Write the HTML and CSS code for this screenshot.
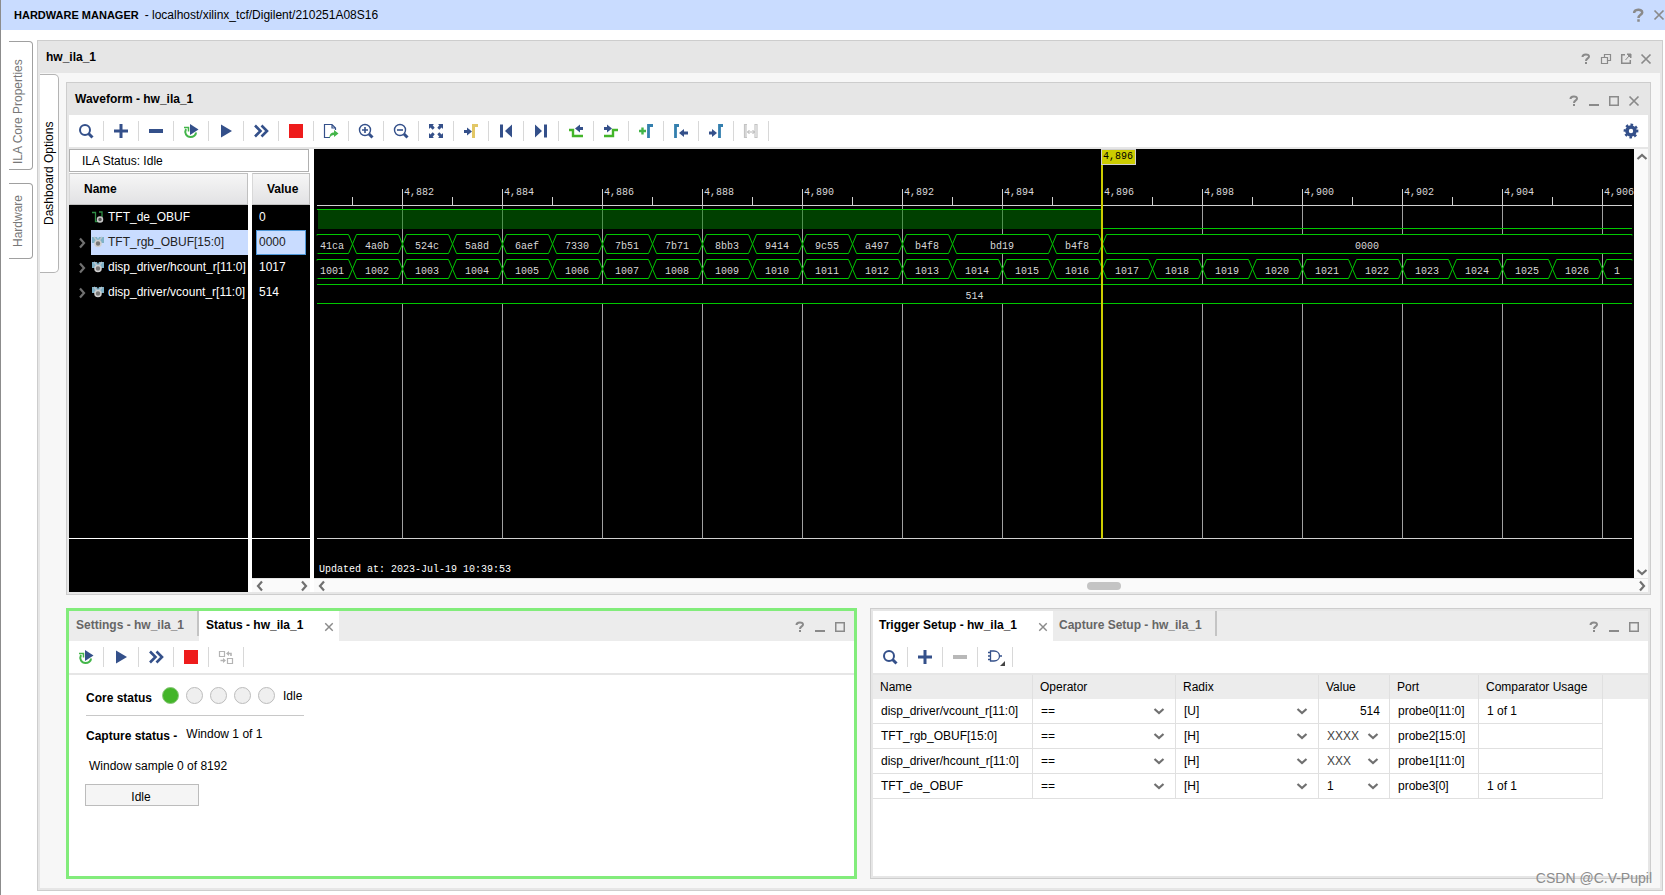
FILE: index.html
```html
<!DOCTYPE html>
<html lang="en">
<head>
<meta charset="utf-8">
<title>Hardware Manager</title>
<link rel="stylesheet" href="styles.css">
</head>
<body>
<svg class="defs" aria-hidden="true">
  <symbol id="search" viewBox="0 0 16 16"><circle cx="7" cy="7" r="5" fill="none" stroke="#34508a" stroke-width="2"/><path d="M10.5 10.5L14.5 14.5" stroke="#34508a" stroke-width="3"/></symbol>
  <symbol id="plus" viewBox="0 0 16 16"><path d="M1 8H15M8 1V15" stroke="currentColor" stroke-width="3"/></symbol>
  <symbol id="minus" viewBox="0 0 16 16"><path d="M1 8H15" stroke="currentColor" stroke-width="4"/></symbol>
  <symbol id="rerun" viewBox="0 0 16 16"><path d="M3 6C1 10 3.500 14 7.500 14C10.500 14 13 12 13 9.500" fill="none" stroke="#43b549" stroke-width="2"/><path d="M1 4.500H5.500V8.500" fill="none" stroke="#43b549" stroke-width="1.500"/><path d="M7 1L15.500 6.500L7 12Z" fill="#34508a"/></symbol>
  <symbol id="play" viewBox="0 0 16 16"><path d="M3 1.500L14 8L3 14.500Z" fill="#34508a"/></symbol>
  <symbol id="ff" viewBox="0 0 16 16"><path d="M2 2.500L7.500 8L2 13.500M8.500 2.500L14 8L8.500 13.500" fill="none" stroke="#34508a" stroke-width="2.600"/></symbol>
  <symbol id="stop" viewBox="0 0 16 16"><path d="M1 1H15V15H1Z" fill="#ee1c1c"/></symbol>
  <symbol id="export" viewBox="0 0 16 16"><path d="M7 14.500H1.500V1.500H9L12.500 5V7M9 1.500V5H12.500" fill="none" stroke="#34508a" stroke-width="1.200"/><path d="M6.500 15C6.500 11 8 9.500 11 9.500V7L15.500 10.500L11 14V12C9 12 7.500 13 6.500 15Z" fill="#43b549"/></symbol>
  <symbol id="zoomin" viewBox="0 0 16 16"><circle cx="7" cy="7" r="5.500" fill="none" stroke="#34508a" stroke-width="1.400"/><path d="M4 7H10M7 4V10" stroke="#34508a" stroke-width="1.600"/><path d="M11 11L14.500 14.500" stroke="#34508a" stroke-width="3"/></symbol>
  <symbol id="zoomout" viewBox="0 0 16 16"><circle cx="7" cy="7" r="5.500" fill="none" stroke="#34508a" stroke-width="1.400"/><path d="M4 7H10" stroke="#34508a" stroke-width="1.600"/><path d="M11 11L14.500 14.500" stroke="#34508a" stroke-width="3"/></symbol>
  <symbol id="fit" viewBox="0 0 16 16"><path d="M1 1H6L4.700 2.300L6.700 4.700L4.700 6.700L2.400 4.600L1 6ZM15 1H10L11.300 2.300L9.300 4.700L11.300 6.700L13.600 4.600L15 6ZM1 15H6L4.700 13.700L6.700 11.300L4.700 9.300L2.400 11.400L1 10ZM15 15H10L11.300 13.700L9.300 11.300L11.300 9.300L13.600 11.400L15 10Z" fill="#34508a"/></symbol>
  <symbol id="trig" viewBox="0 0 16 16"><path d="M1 7H4V4.500L9 8.500L4 12.500V10H1Z" fill="#34508a"/><path d="M10.500 15V2.500H15" fill="none" stroke="#e2c766" stroke-width="3"/></symbol>
  <symbol id="first" viewBox="0 0 16 16"><path d="M2 1.500H5V14.500H2ZM14 1.500V14.500L7 8Z" fill="#34508a"/></symbol>
  <symbol id="last" viewBox="0 0 16 16"><path d="M14 1.500H11V14.500H14ZM2 1.500V14.500L9 8Z" fill="#34508a"/></symbol>
  <symbol id="prevedge" viewBox="0 0 16 16"><path d="M1 7H5V13H15" fill="none" stroke="#43b529" stroke-width="2.400"/><path d="M15 4V7H12V9.500L7 5.500L12 1.500V4Z" fill="#34508a"/></symbol>
  <symbol id="nextedge" viewBox="0 0 16 16"><path d="M1 13H10V7H15" fill="none" stroke="#43b529" stroke-width="2.400"/><path d="M1 4V7H4V9.500L9 5.500L4 1.500V4Z" fill="#34508a"/></symbol>
  <symbol id="addmark" viewBox="0 0 16 16"><path d="M1 8H8M4.500 4.500V11.500" stroke="#43b549" stroke-width="2.400"/><path d="M10.500 15V2.500H15" fill="none" stroke="#347fae" stroke-width="2.800"/></symbol>
  <symbol id="prevmark" viewBox="0 0 16 16"><path d="M2.500 15V2.500H6" fill="none" stroke="#347fae" stroke-width="2.800"/><path d="M15 8.500V11.500H11V14L6 10L11 6V8.500Z" fill="#34508a"/></symbol>
  <symbol id="nextmark" viewBox="0 0 16 16"><path d="M11.500 15V2.500H15" fill="none" stroke="#347fae" stroke-width="2.800"/><path d="M1 8.500V11.500H4V14L9 10L4 6V8.500Z" fill="#34508a"/></symbol>
  <symbol id="span" viewBox="0 0 16 16"><path d="M4 1.500H1.500V14.500H4M3 1.500V14.500M12 1.500H14V14.500H12Z" fill="none" stroke="#c4c4c4" stroke-width="1.200"/><path d="M4.500 9H11.500M6.500 7L4.500 9L6.500 11M9.500 7L11.500 9L9.500 11" fill="none" stroke="#b4b4b4"/></symbol>
  <symbol id="swap" viewBox="0 0 16 16"><path d="M1.500 2.500H6.500V7.500H1.500ZM9.500 9.500H14.500V14.500H9.500Z" fill="none" stroke="#b4b4b4" stroke-width="1.200"/><path d="M13 7V4.500H10M2.500 11.500H6" fill="none" stroke="#b4b4b4" stroke-width="1.600"/><path d="M8 4.500L11 2V7ZM8 11.500L5 9V14Z" fill="#b4b4b4"/></symbol>
  <symbol id="gate" viewBox="0 0 20 18"><path d="M5.500 3H9C12 3 14.500 5 14.500 8S12 13 9 13H5.500ZM3 4.500H5.500M3 8H5.500M3 11.500H5.500M14.500 8H17" fill="none" stroke="#34508a" stroke-width="1.300"/><path d="M20 13V18H15Z" fill="#444"/></symbol>
  <symbol id="gear" viewBox="0 0 16 16"><circle cx="8" cy="8" r="4" fill="none" stroke="#34508a" stroke-width="3.600"/><circle cx="8" cy="8" r="6" fill="none" stroke="#34508a" stroke-width="2.800" stroke-dasharray="2.400 2.312" transform="rotate(-11 8 8)"/></symbol>
  <symbol id="help" viewBox="0 0 12 12"><path d="M2.500 4C2.500 .700 9 .500 9 3.500C9 5.500 6 5.300 6 8" fill="none" stroke="#8a8a8a" stroke-width="2"/><path d="M5 9H7V11H5Z" fill="#8a8a8a"/></symbol>
  <symbol id="close" viewBox="0 0 12 12"><path d="M1.500 1.500L10.500 10.500M10.500 1.500L1.500 10.500" stroke="#8a8a8a" stroke-width="1.700"/></symbol>
  <symbol id="min" viewBox="0 0 12 12"><path d="M1 10H11" stroke="#8a8a8a" stroke-width="2"/></symbol>
  <symbol id="max" viewBox="0 0 12 12"><path d="M1.750 1.750H10.250V10.250H1.750Z" fill="none" stroke="#8a8a8a" stroke-width="1.500"/></symbol>
  <symbol id="restore" viewBox="0 0 12 12"><path d="M4.500 4.500V1.500H10.500V7.500H7.500M1.500 4.500H7.500V10.500H1.500Z" fill="none" stroke="#8a8a8a" stroke-width="1.200"/></symbol>
  <symbol id="float" viewBox="0 0 12 12"><path d="M5 1.700H1.700V10.300H10.300V7" fill="none" stroke="#8a8a8a" stroke-width="1.500"/><path d="M11 1V5L7 1ZM5.500 7L9 3" fill="#8a8a8a" stroke="#8a8a8a"/></symbol>
  <symbol id="chev" viewBox="0 0 12 12"><path d="M1.500 4L6 8L10.500 4" fill="none" stroke="#707070" stroke-width="2.200"/></symbol>
  <symbol id="wire" viewBox="0 0 12 12"><path d="M0 1.500H3.500V10.500H7M7 1H10V6" fill="none" stroke="#2f8f46" stroke-width="1.300"/><circle cx="8" cy="8.500" r="2.500" fill="#555" stroke="#c8c8c8" stroke-width="1.500"/></symbol>
  <symbol id="bus" viewBox="0 0 12 12"><path d="M0 1H5L6 3L7 1H12V7H0Z" fill="#7fb2c8"/><path d="M2 1L6 6L10 1" fill="none" stroke="#b8c4cc" stroke-width="1.500"/><circle cx="6" cy="7.500" r="3" fill="#777" stroke="#d0d0d0" stroke-width="1.600"/></symbol>
</svg>

<div class="app">
  <header class="app-bar">
    <h1>HARDWARE MANAGER</h1>
    <span class="app-path">- localhost/xilinx_tcf/Digilent/210251A08S16</span>
    <div class="win wide">
      <button aria-label="Help"><svg class="big"><use href="#help"/></svg></button>
      <button aria-label="Close"><svg><use href="#close"/></svg></button>
    </div>
  </header>
  <div class="workspace">
    <nav class="side-tabs">
      <button class="side-tab tall">ILA Core Properties</button>
      <button class="side-tab">Hardware</button>
    </nav>
    <main class="dashboard">
      <div class="title-bar">
        <h2>hw_ila_1</h2>
        <div class="win">
          <button aria-label="Help"><svg><use href="#help"/></svg></button>
          <button aria-label="Restore"><svg><use href="#restore"/></svg></button>
          <button aria-label="Float"><svg><use href="#float"/></svg></button>
          <button aria-label="Close"><svg><use href="#close"/></svg></button>
        </div>
      </div>
      <div class="dash-body">
        <button class="dash-tab">Dashboard Options</button>
        <div class="panels">
          <section class="panel wave-panel">
            <div class="title-bar">
              <h2>Waveform - hw_ila_1</h2>
              <div class="win">
                <button aria-label="Help"><svg><use href="#help"/></svg></button>
                <button aria-label="Minimize"><svg><use href="#min"/></svg></button>
                <button aria-label="Maximize"><svg><use href="#max"/></svg></button>
                <button aria-label="Close"><svg><use href="#close"/></svg></button>
              </div>
            </div>
            <div class="toolbar">
              <button aria-label="Search"><svg><use href="#search"/></svg></button>
              <button aria-label="Add"><svg><use href="#plus"/></svg></button>
              <button aria-label="Remove"><svg><use href="#minus"/></svg></button>
              <button aria-label="Auto re-trigger"><svg><use href="#rerun"/></svg></button>
              <button aria-label="Run trigger"><svg><use href="#play"/></svg></button>
              <button aria-label="Run immediate"><svg><use href="#ff"/></svg></button>
              <button aria-label="Stop"><svg><use href="#stop"/></svg></button>
              <button aria-label="Export"><svg><use href="#export"/></svg></button>
              <button aria-label="Zoom in"><svg><use href="#zoomin"/></svg></button>
              <button aria-label="Zoom out"><svg><use href="#zoomout"/></svg></button>
              <button aria-label="Zoom fit"><svg><use href="#fit"/></svg></button>
              <button aria-label="Go to trigger"><svg><use href="#trig"/></svg></button>
              <button aria-label="Go to start"><svg><use href="#first"/></svg></button>
              <button aria-label="Go to end"><svg><use href="#last"/></svg></button>
              <button aria-label="Previous transition"><svg><use href="#prevedge"/></svg></button>
              <button aria-label="Next transition"><svg><use href="#nextedge"/></svg></button>
              <button aria-label="Add marker"><svg><use href="#addmark"/></svg></button>
              <button aria-label="Previous marker"><svg><use href="#prevmark"/></svg></button>
              <button aria-label="Next marker"><svg><use href="#nextmark"/></svg></button>
              <button aria-label="Swap cursors" disabled><svg><use href="#span"/></svg></button>
              <button class="gear" aria-label="Settings"><svg><use href="#gear"/></svg></button>
            </div>
            <div class="wave">
              <div class="signals">
                <div class="ila-status">ILA Status: Idle</div>
                <div class="signal-cols">
                  <div class="col names">
                    <div class="col-head">Name</div>
                    <ul>
                      <li><i class="twist"></i><span><svg><use href="#wire"/></svg>TFT_de_OBUF</span></li>
                      <li><i class="twist"><svg><use href="#chev"/></svg></i><span class="sel"><svg><use href="#bus"/></svg>TFT_rgb_OBUF[15:0]</span></li>
                      <li><i class="twist"><svg><use href="#chev"/></svg></i><span><svg><use href="#bus"/></svg>disp_driver/hcount_r[11:0]</span></li>
                      <li><i class="twist"><svg><use href="#chev"/></svg></i><span><svg><use href="#bus"/></svg>disp_driver/vcount_r[11:0]</span></li>
                    </ul>
                    <div class="col-foot"></div>
                  </div>
                  <div class="col values">
                    <div class="col-head">Value</div>
                    <ul>
                      <li>0</li>
                      <li class="sel">0000</li>
                      <li>1017</li>
                      <li>514</li>
                    </ul>
                    <div class="col-foot"></div>
                    <div class="hscroll"><svg class="left"><use href="#chev"/></svg><svg class="right"><use href="#chev"/></svg></div>
                  </div>
                </div>
              </div>
              <div class="canvas-col">
                <div class="canvas-row">
                  <div class="canvas">
                    <svg id="plot" role="img" aria-label="Waveform"></svg>
                    <div class="updated">Updated at: 2023-Jul-19 10:39:53</div>
                  </div>
                  <div class="vscroll"><svg class="up"><use href="#chev"/></svg><svg><use href="#chev"/></svg></div>
                </div>
                <div class="hscroll"><svg class="left"><use href="#chev"/></svg><b class="thumb"></b><svg class="right"><use href="#chev"/></svg></div>
              </div>
            </div>
          </section>

          <div class="lower">
            <section class="panel status-panel">
              <div class="tab-bar">
                <button class="tab t-settings">Settings - hw_ila_1</button>
                <button class="tab t-status active">Status - hw_ila_1<svg><use href="#close"/></svg></button>
                <div class="win">
                  <button aria-label="Help"><svg><use href="#help"/></svg></button>
                  <button aria-label="Minimize"><svg><use href="#min"/></svg></button>
                  <button aria-label="Maximize"><svg><use href="#max"/></svg></button>
                </div>
              </div>
              <div class="toolbar">
                <button aria-label="Auto re-trigger"><svg><use href="#rerun"/></svg></button>
                <button aria-label="Run trigger"><svg><use href="#play"/></svg></button>
                <button aria-label="Run immediate"><svg><use href="#ff"/></svg></button>
                <button aria-label="Stop"><svg><use href="#stop"/></svg></button>
                <button aria-label="Swap" disabled><svg><use href="#swap"/></svg></button>
              </div>
              <div class="status-body">
                <div class="core">
                  <strong>Core status</strong>
                  <div class="leds"><i class="on"></i><i></i><i></i><i></i><i></i></div>
                  <span>Idle</span>
                </div>
                <div class="capture"><strong>Capture status -</strong><span>Window 1 of 1</span></div>
                <p>Window sample 0 of 8192</p>
                <div class="idle-bar">Idle</div>
              </div>
            </section>

            <section class="panel trigger-panel">
              <div class="tab-bar">
                <button class="tab t-trigger active">Trigger Setup - hw_ila_1<svg><use href="#close"/></svg></button>
                <button class="tab t-capture">Capture Setup - hw_ila_1</button>
                <div class="win">
                  <button aria-label="Help"><svg><use href="#help"/></svg></button>
                  <button aria-label="Minimize"><svg><use href="#min"/></svg></button>
                  <button aria-label="Maximize"><svg><use href="#max"/></svg></button>
                </div>
              </div>
              <div class="toolbar">
                <button aria-label="Search"><svg><use href="#search"/></svg></button>
                <button aria-label="Add"><svg><use href="#plus"/></svg></button>
                <button aria-label="Remove" disabled><svg><use href="#minus"/></svg></button>
                <button aria-label="Trigger condition"><svg class="gate"><use href="#gate"/></svg></button>
              </div>
              <table>
                <colgroup><col class="c-name"><col class="c-op"><col class="c-op"><col class="c-val"><col class="c-port"><col class="c-use"><col></colgroup>
                <thead><tr><th>Name</th><th>Operator</th><th>Radix</th><th>Value</th><th>Port</th><th>Comparator Usage</th><td></td></tr></thead>
                <tbody>
                  <tr><td>disp_driver/vcount_r[11:0]</td>
                    <td><div class="pick"><select aria-label="Operator"><option>==</option></select><svg><use href="#chev"/></svg></div></td>
                    <td><div class="pick"><select aria-label="Radix"><option>[U]</option></select><svg><use href="#chev"/></svg></div></td>
                    <td class="num">514</td><td>probe0[11:0]</td><td>1 of 1</td><td class="rest"></td></tr>
                  <tr><td>TFT_rgb_OBUF[15:0]</td>
                    <td><div class="pick"><select aria-label="Operator"><option>==</option></select><svg><use href="#chev"/></svg></div></td>
                    <td><div class="pick"><select aria-label="Radix"><option>[H]</option></select><svg><use href="#chev"/></svg></div></td>
                    <td><div class="pick"><select class="dim" aria-label="Value"><option>XXXX</option></select><svg><use href="#chev"/></svg></div></td><td>probe2[15:0]</td><td></td><td class="rest"></td></tr>
                  <tr><td>disp_driver/hcount_r[11:0]</td>
                    <td><div class="pick"><select aria-label="Operator"><option>==</option></select><svg><use href="#chev"/></svg></div></td>
                    <td><div class="pick"><select aria-label="Radix"><option>[H]</option></select><svg><use href="#chev"/></svg></div></td>
                    <td><div class="pick"><select class="dim" aria-label="Value"><option>XXX</option></select><svg><use href="#chev"/></svg></div></td><td>probe1[11:0]</td><td></td><td class="rest"></td></tr>
                  <tr><td>TFT_de_OBUF</td>
                    <td><div class="pick"><select aria-label="Operator"><option>==</option></select><svg><use href="#chev"/></svg></div></td>
                    <td><div class="pick"><select aria-label="Radix"><option>[H]</option></select><svg><use href="#chev"/></svg></div></td>
                    <td><div class="pick"><select aria-label="Value"><option>1</option></select><svg><use href="#chev"/></svg></div></td><td>probe3[0]</td><td>1 of 1</td><td class="rest"></td></tr>
                </tbody>
              </table>
            </section>
          </div>
        </div>
      </div>
    </main>
  </div>
  <div class="watermark">CSDN @C.V-Pupil</div>
</div>
<script src="wave.js"></script>
</body>
</html>
```
FILE: styles.css
```css
* { box-sizing: border-box; }
body {
  margin: 0;
  background: #fff;
  color: #000;
  font: 12px/16px "Liberation Sans", Arial, sans-serif;
}
h1, h2, p, ul { margin: 0; padding: 0; font-size: 12px; }
ul { list-style: none; }
button {
  margin: 0;
  padding: 0;
  border: 0;
  background: none;
  font: inherit;
  color: inherit;
}
svg { display: block; flex: none; }
.defs { position: absolute; width: 0; height: 0; }

.app {
  position: relative;
  display: flex;
  flex-direction: column;
  min-height: 100vh;
  border-left: 1px solid #8c8c8c;
}
.app-bar {
  display: flex;
  align-items: center;
  height: 30px;
  padding-left: 13px;
  background: #c9dcff;
}
.app-bar h1 { font-size: 11px; }
.app-path { margin-left: 6px; }
.workspace {
  flex: 1;
  display: flex;
  padding: 10px 2px 4px 8px;
}

/* Window buttons */
.win { display: flex; margin-left: auto; padding: 4px 4px 0 0; }
.win button { width: 20px; height: 20px; display: grid; place-items: center; }
.win svg { width: 12px; height: 12px; }
.win.wide { padding: 0; gap: 7px; }
.win.wide button { width: auto; }
.win.wide svg.big { width: 15px; height: 15px; }

/* Vertical tabs */
.side-tabs { display: flex; flex-direction: column; gap: 13px; width: 28px; padding-top: 1px; }
.side-tab, .dash-tab {
  writing-mode: vertical-rl;
  transform: rotate(180deg);
  text-align: center;
}
.side-tab {
  width: 24px;
  height: 76px;
  padding-left: 5px;
  border: 1px solid #a0a0a0;
  border-right: 0;
  border-radius: 4px 0 0 4px;
  color: #777;
}
.side-tab.tall { height: 129px; padding-top: 0; padding-bottom: 12px; }
.dash-tab {
  width: 19px;
  height: 199px;
  margin-top: 1px;
  border: 1px solid #b4b4b4;
  border-right: 0;
  border-radius: 5px 0 0 5px;
  background: #fff;
}

/* Frames */
.dashboard {
  flex: 1;
  min-width: 0;
  display: flex;
  flex-direction: column;
  border: 1px solid #cdcdcd;
  background: #f7f7f7;
  box-shadow: inset 0 0 0 2px #e6e6e6;
  padding: 0 2px 2px;
}
.title-bar {
  display: flex;
  align-items: center;
  height: 32px;
  padding-left: 6px;
  background: #e6e6e6;
}
.dash-body { flex: 1; display: flex; align-items: flex-start; }
.panels {
  flex: 1;
  align-self: stretch;
  min-width: 0;
  display: flex;
  flex-direction: column;
  gap: 13px;
  padding: 9px 9px 9px 7px;
}
.panel {
  display: flex;
  flex-direction: column;
  min-width: 0;
  border: 1px solid #cdcdcd;
  background: #fff;
  box-shadow: inset 0 0 0 2px #e6e6e6;
  padding: 2px;
}
.wave-panel { flex: 512 1 0; padding-top: 0; }
.lower { flex: 272 1 0; display: flex; gap: 13px; }
.status-panel { flex: 791 1 0; border: 3px solid #82ec7b; box-shadow: none; padding: 0; }
.trigger-panel { flex: 781 1 0; }

.toolbar {
  display: flex;
  align-items: center;
  height: 34px;
  flex: none;
  border-bottom: 2px solid #e6e6e6;
  background: #fff;
  color: #34508a;
}
.toolbar button {
  width: 35px;
  height: 20px;
  display: grid;
  place-items: center;
  border-right: 1px solid #d8d8d8;
}
.toolbar button:disabled { color: #b8b8b8; }
.toolbar svg { width: 16px; height: 16px; }
.toolbar svg.gate { width: 20px; height: 18px; }
.toolbar .gear { margin-left: auto; border: 0; }

/* Waveform */
.wave { flex: 1; display: flex; gap: 4px; background: #fff; }
.signals { width: 241px; display: flex; flex-direction: column; gap: 1px; }
.ila-status { height: 23px; padding: 3px 12px; border: 1px solid #b0b0b0; margin-right: 1px; }
.signal-cols { flex: 1; display: flex; gap: 4px; }
.col { display: flex; flex-direction: column; background: #000; color: #fff; }
.names { width: 179px; }
.values { width: 58px; }
.col-head {
  height: 32px;
  padding: 7px 14px;
  border: 1px solid #c0c0c0;
  border-left-color: #d8d8d8;
  background: linear-gradient(#f6f6f6, #e2e2e4);
  color: #000;
  font-weight: bold;
}
.col ul { flex: 1; }
.col li { display: flex; height: 25px; line-height: 24px; white-space: nowrap; overflow: hidden; }
.twist { width: 22px; padding: 7px 0 0 7px; flex: none; }
.twist svg { width: 12px; height: 12px; transform: rotate(-90deg); }
.names span { flex: 1; display: flex; align-items: center; gap: 4px; padding: 0 0 2px 1px; }
.names span svg { width: 12px; height: 12px; }
.names .sel, .values .sel { background: #c9dcff; color: #222; }
.values li { padding-left: 7px; }
.values .sel { margin: 0 4px; padding-left: 2px; border: 1px solid #4f97d8; line-height: 22px; }
.col-foot { height: 54px; border-top: 1px solid #fff; }
.values .col-foot { height: 40px; }

.canvas-col { flex: 1; min-width: 0; display: flex; flex-direction: column; }
.canvas-row { flex: 1; display: flex; }
.canvas {
  flex: 1;
  min-width: 0;
  display: flex;
  flex-direction: column;
  overflow: hidden;
  padding: 0 2px 0 3px;
  background: #000;
  color: #fff;
  font: 10px/12px "Liberation Mono", monospace;
}
#plot { flex: 1; width: 100%; overflow: visible; border-bottom: 1px solid #d0d0d0; }
.updated { height: 39px; padding: 25px 2px 0; }

.hscroll { display: flex; justify-content: space-between; align-items: center; height: 14px; padding-left: 2px; background: #fafafa; border-top: 1px solid #e4e4e4; }
.vscroll { display: flex; flex-direction: column; justify-content: space-between; width: 14px; padding: 2px 0 0 2px; background: #fafafa; }
.hscroll svg, .vscroll svg { width: 12px; height: 12px; }
.hscroll .left { transform: rotate(90deg); }
.hscroll .right { transform: rotate(-90deg); }
.vscroll .up { transform: rotate(180deg); }
.thumb { width: 34px; height: 8px; margin-left: 244px; border-radius: 4px; background: #c4c4c4; }

#plot text { fill: #d8d8d8; }
.ruler { stroke: #d0d0d0; }
.grid { stroke: #a0a0a0; }
.sig { fill: none; stroke: #00c800; }
.mask { fill: #000; stroke: #00c800; }
.high { fill: #008000; fill-opacity: 0.5; }
.cursor { fill: #cccc00; }
.flag { fill: #cccc00; stroke: #d0d0d0; }
#plot .flag-text { fill: #000; }

/* Tabs */
.tab-bar { display: flex; align-items: flex-start; height: 30px; flex: none; background: #ececec; }
.tab {
  display: flex;
  justify-content: space-between;
  height: 25px;
  padding: 6px 7px 0;
  border-right: 2px solid #c4c4c4;
  color: #666;
  font-weight: bold;
  white-space: nowrap;
}
.tab.active { height: 30px; border: 0; background: #fff; color: #000; padding-right: 5px; }
.tab svg { width: 10px; height: 10px; margin-top: 5px; }
.t-settings { width: 130px; }
.t-status { width: 140px; }
.t-trigger { width: 180px; padding-left: 6px; }
.t-capture { width: 164px; padding-left: 6px; }
.tab-bar .win { padding: 6px 4px 0 0; }

/* Status */
.status-body { padding: 12px 16px; }
.core { display: flex; width: 218px; height: 29px; margin-left: 1px; border-bottom: 1px solid #c8c8c8; }
.core strong { padding-top: 3px; }
.leds { display: flex; gap: 7px; margin: 0 8px 0 10px; }
.leds i { width: 17px; height: 17px; border: 1px solid #bcbcbc; border-radius: 50%; background: #efefef; }
.leds .on { background: #43b529; border-color: #8cc87c; }
.core span { padding-top: 1px; }
.capture { display: flex; gap: 9px; padding: 10px 1px 0; }
.capture strong { padding-top: 2px; }
.status-body p { margin: 14px 0 10px; padding-left: 4px; }
.idle-bar { width: 114px; height: 22px; padding: 4px 2px 0 0; border: 1px solid #bcbcbc; background: #f5f5f5; text-align: center; }

/* Trigger table */
table { width: 100%; table-layout: fixed; border-collapse: separate; border-spacing: 0; }
.c-name { width: 160px; }
.c-op { width: 143px; }
.c-val { width: 71px; }
.c-port { width: 89px; }
.c-use { width: 124px; }
th, td { height: 25px; padding: 0 0 0 8px; border-right: 1px solid #e0e0e0; border-bottom: 1px solid #e0e0e0; text-align: left; font-weight: normal; white-space: nowrap; }
th, thead td { height: 24px; padding: 0 0 0 7px; background: #ececec; border-bottom: 0; }
thead td, td.rest { border-right: 0; }
td.rest { border-bottom: 0; }
td.num { padding-right: 9px; text-align: right; }
.pick { position: relative; }
.pick select {
  display: block;
  width: 100%;
  height: 16px;
  margin: 0;
  padding: 0;
  border: 0;
  appearance: none;
  background: none;
  font: inherit;
  color: inherit;
}
.pick .dim { color: #444; }
.pick svg { position: absolute; right: 10px; top: 2px; width: 12px; height: 12px; pointer-events: none; }

.watermark {
  position: absolute;
  right: 13px;
  bottom: 9px;
  color: #8c8c8c;
  font-size: 14px;
}
```
FILE: wave.js
```js
const NS = "http://www.w3.org/2000/svg";
const plot = document.getElementById("plot");
const width = plot.clientWidth;
const STEP = 50;
const FIRST = 35;
const CURSOR = 785;

function add(name, attrs, text) {
  const el = document.createElementNS(NS, name);
  for (const key in attrs) el.setAttribute(key, attrs[key]);
  if (text !== undefined) el.textContent = text;
  plot.appendChild(el);
}
function line(cls, x1, y1, x2, y2) {
  add("line", { class: cls, x1, y1, x2, y2 });
}
function label(x, y, text) {
  add("text", { x, y, "text-anchor": "middle" }, text);
}

// Ruler and grid
line("ruler", 0, 56.5, width, 56.5);
for (let x = FIRST, n = 4881; x < width; x += STEP, n++) {
  if (n % 2) {
    line("ruler", x + 0.5, 48, x + 0.5, 56);
  } else {
    line("ruler", x + 0.5, 40, x + 0.5, 57);
    line("grid", x + 0.5, 57, x + 0.5, "100%");
    add("text", { x: x + 2, y: 46 }, "4," + String(n).slice(1));
  }
}

// Single-bit signal
add("rect", { class: "high", x: 1, y: 61, width: CURSOR - 1, height: 19 });
line("sig", 0, 60.5, CURSOR, 60.5);
line("sig", CURSOR, 79.5, width, 79.5);

// Buses: each segment is [value, number of samples]
function bus(top, segments) {
  const mid = top + 9.5, bottom = top + 19;
  let start = 0, end = FIRST;
  segments.forEach(([value, count], i) => {
    if (i > 0) end = start + STEP * count;
    const last = end >= width;
    const right = last ? width : end;
    const l = i === 0 ? `M0 ${bottom}V${top}` : `M${start + 4.5} ${bottom}L${start + 0.5} ${mid}L${start + 4.5} ${top}`;
    const r = last ? `H${right}V${bottom}` : `H${right - 3.5}L${right + 0.5} ${mid}L${right - 3.5} ${bottom}`;
    add("path", { class: "mask", d: l + r + "Z" });
    if (i === 0) add("rect", { x: -1, y: top + 1, width: 2, height: 18 });
    if (last) add("rect", { x: width - 1, y: top + 1, width: 2, height: 18 });
    label(i === 0 ? 15 : (start + right) / 2, top + 14, value);
    start = end;
  });
}
bus(85.5, [["41ca", 1], ["4a0b", 1], ["524c", 1], ["5a8d", 1], ["6aef", 1], ["7330", 1], ["7b51", 1], ["7b71", 1],
  ["8bb3", 1], ["9414", 1], ["9c55", 1], ["a497", 1], ["b4f8", 1], ["bd19", 2], ["b4f8", 1], ["0000", 11]]);
const counts = [];
for (let n = 1001; n <= 1026; n++) counts.push([n, 1]);
counts.push(["1", 1]);
bus(110.5, counts);

add("rect", { x: 0, y: 136, width, height: 18 });
line("sig", 0, 135.5, width, 135.5);
line("sig", 0, 154.5, width, 154.5);
label(width / 2, 150, "514");

// Cursor
add("rect", { class: "cursor", x: CURSOR - 1, y: 0, width: 2, height: "100%" });
add("rect", { class: "flag", x: CURSOR - 0.5, y: 0.5, width: 34, height: 15 });
add("text", { class: "flag-text", x: CURSOR + 1, y: 10 }, "4,896");
```
